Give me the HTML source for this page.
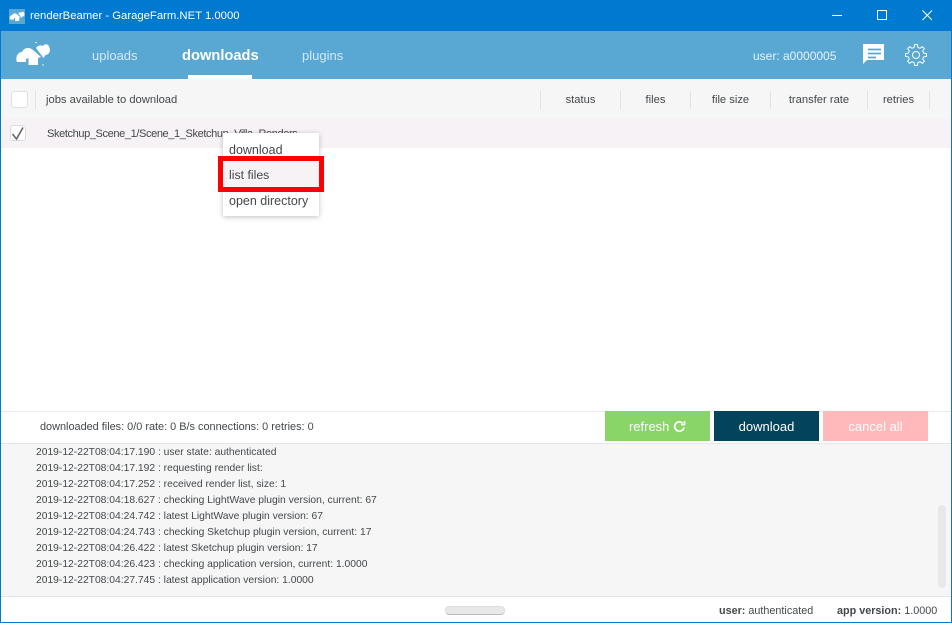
<!DOCTYPE html>
<html><head><meta charset="utf-8"><style>
html,body{margin:0;padding:0;background:#fff}
#w{position:relative;width:952px;height:623px;overflow:hidden;background:#fff;font-family:"Liberation Sans",sans-serif;font-size:11.5px;color:#43484b}
#w div,#w svg{position:absolute}
.t{white-space:nowrap;line-height:16px}
.c{text-align:center}
.sep{width:1px;height:18px;top:91px;background:#e2e2e2}
.btn{top:411px;width:105px;height:30px;line-height:31px;text-align:center;color:#fff;font-size:13px}
.log{left:36px;font-size:10.3px;white-space:nowrap;line-height:16px;color:#43484b}
</style></head><body><div id="w">
<div style="left:0;top:0;width:952px;height:31px;background:#0079d0"></div>
<div style="left:0;top:31px;width:952px;height:48px;background:#58a8d3"></div>
<div style="left:9px;top:9px;width:16px;height:15px;background:#58a8d3"></div>
<svg style="left:9px;top:9px" width="16" height="15" viewBox="5 4 36 26"><path fill="#fff" d="M7 24C5 19 8 14 12 14C14 9 20 9 23 12L31 19L28 20V27H18.500V20L16 21V24Z"/><path fill="#fff" d="M26 10C28 7 31 7 33 8C35 5 39 6 39.500 10C41 14 38 17 35.500 17L33.500 20Z"/></svg>
<div class="t" style="left:30px;top:8px;color:#fff;font-size:11.300px">renderBeamer - GarageFarm.NET 1.0000</div>
<svg style="left:832px;top:8px" width="110" height="16" fill="none" stroke="#fff" stroke-width="1"><path d="M0 7.500H10"/><rect x="45.500" y="2.500" width="9" height="9"/><path d="M90.500 2.500L100 12M100 2.500L90.500 12"/></svg>
<svg style="left:10px;top:38px" width="50" height="34" viewBox="0 0 50 34"><path fill="#fff" d="M7 24C5 19 8 14 12 14C14 9 20 9 23 12L31 19L28 20V27H18.500V20L16 21V24Z"/><path fill="#fff" d="M26 10C28 7 31 7 33 8C35 5 39 6 39.500 10C41 14 38 17 35.500 17L33.500 20Z"/><circle cx="26" cy="4.500" r=".8" fill="#fff"/><circle cx="33" cy="27" r=".7" fill="#fff"/></svg>
<div class="t" style="left:92px;top:48px;color:#d6e9f4;font-size:13px">uploads</div>
<div class="t" style="left:182px;top:48px;color:#fff;font-size:14.700px;font-weight:bold">downloads</div>
<div style="left:188px;top:75px;width:64px;height:4px;background:#fff"></div>
<div class="t" style="left:302px;top:48px;color:#d6e9f4;font-size:13px">plugins</div>
<div class="t" style="left:753px;top:48px;color:#e8f3f9;font-size:12px">user: a0000005</div>
<svg style="left:862px;top:43px" width="24" height="24" viewBox="0 0 24 24"><path fill="#fff" d="M1 1H22V17H5L1 21Z"/><path stroke="#58a8d3" stroke-width="1.800" d="M6 6.500H19M6 10.500H19M6 14.500H14"/></svg>
<svg style="left:904px;top:43px" width="24" height="24" viewBox="0 0 24 24" fill="none" stroke="#fff" stroke-width="1"><circle cx="12" cy="12" r="3.500"/><path d="M10.110 4.430L10.540 1.600H13.460L13.890 4.430L16.020 5.310L18.320 3.610L20.390 5.680L18.690 7.980L19.570 10.110L22.400 10.540V13.460L19.570 13.890L18.690 16.020L20.390 18.320L18.320 20.390L16.020 18.690L13.890 19.570L13.460 22.400H10.540L10.110 19.570L7.980 18.690L5.680 20.390L3.610 18.320L5.310 16.020L4.430 13.890L1.600 13.460V10.540L4.430 10.110L5.310 7.980L3.610 5.680L5.680 3.610L7.980 5.310Z"/></svg>
<div style="left:1px;top:79px;width:950px;height:40px;background:#f6f6f6"></div>
<div style="left:1px;top:118px;width:950px;height:30px;background:#f6f2f6"></div>
<div style="left:11px;top:91px;width:15px;height:15px;background:#fff;border:1px solid #e0e0e0;border-radius:3px"></div>
<div class="sep" style="left:35px"></div>
<div class="t" style="left:46px;top:92px;font-size:11.200px">jobs available to download</div>
<div class="sep" style="left:540px"></div>
<div class="t c" style="left:541px;width:79px;top:92px;font-size:11.200px">status</div>
<div class="sep" style="left:620px"></div>
<div class="t c" style="left:621px;width:69px;top:92px;font-size:11.200px">files</div>
<div class="sep" style="left:690px"></div>
<div class="t c" style="left:691px;width:79px;top:92px;font-size:11.200px">file size</div>
<div class="sep" style="left:770px"></div>
<div class="t c" style="left:771px;width:96px;top:92px;font-size:11.200px">transfer rate</div>
<div class="sep" style="left:867px"></div>
<div class="t c" style="left:868px;width:61px;top:92px;font-size:11.200px">retries</div>
<div class="sep" style="left:929px"></div>
<div style="left:10px;top:125px;width:14px;height:14px;background:#fff;border:1px solid #dcdcdc;border-radius:3px"></div>
<svg style="left:10px;top:125px" width="16" height="16" fill="none" stroke="#666" stroke-width="1.600"><path d="M2.500 9L6.500 14L13 2.500"/></svg>
<div class="t" style="left:47px;top:126px;font-size:11px;letter-spacing:-.38px">Sketchup_Scene_1/Scene_1_Sketchup_Villa_Renders</div>
<div style="left:223px;top:133px;width:96px;height:83px;background:#fff;box-shadow:0 1px 5px rgba(0,0,0,.25)"></div>
<div style="left:223px;top:160px;width:96px;height:27px;background:#f6f2f6"></div>
<div style="left:218px;top:156px;width:96px;height:26px;border:5px solid #fe0000"></div>
<div class="t" style="left:229px;top:142px;font-size:12.500px">download</div>
<div class="t" style="left:229px;top:167px;font-size:12.300px">list files</div>
<div class="t" style="left:229px;top:193px;font-size:12.500px">open directory</div>
<div style="left:1px;top:411px;width:950px;height:1px;background:#ececec"></div>
<div class="t" style="left:40px;top:419px;font-size:10.900px">downloaded files: 0/0 rate: 0 B/s connections: 0 retries: 0</div>
<div class="btn" style="left:605px;background:#8ad568">refresh <svg style="position:static;vertical-align:-2px" width="13" height="13" viewBox="0 0 13 13" fill="none" stroke="#fff" stroke-width="1.700"><path d="M11 7.500A4.700 4.700 0 1 1 9.500 3"/><path d="M11.500 1V4.500H8"/></svg></div>
<div class="btn" style="left:714px;background:#03445c">download</div>
<div class="btn" style="left:823px;background:#ffb9bb">cancel all</div>
<div style="left:1px;top:443px;width:950px;height:153px;background:#f6f6f6;border-top:1px solid #e6e6e6;box-sizing:border-box"></div>
<div class="log" style="top:445px">2019-12-22T08:04:17.190 : user state: authenticated</div>
<div class="log" style="top:461px">2019-12-22T08:04:17.192 : requesting render list:</div>
<div class="log" style="top:477px">2019-12-22T08:04:17.252 : received render list, size: 1</div>
<div class="log" style="top:493px">2019-12-22T08:04:18.627 : checking LightWave plugin version, current: 67</div>
<div class="log" style="top:509px">2019-12-22T08:04:24.742 : latest LightWave plugin version: 67</div>
<div class="log" style="top:525px">2019-12-22T08:04:24.743 : checking Sketchup plugin version, current: 17</div>
<div class="log" style="top:541px">2019-12-22T08:04:26.422 : latest Sketchup plugin version: 17</div>
<div class="log" style="top:557px">2019-12-22T08:04:26.423 : checking application version, current: 1.0000</div>
<div class="log" style="top:573px">2019-12-22T08:04:27.745 : latest application version: 1.0000</div>
<div style="left:938px;top:505px;width:8px;height:83px;background:#e8e8e8;border-radius:4px"></div>
<div style="left:1px;top:596px;width:950px;height:1px;background:#e6e6e6"></div>
<div style="left:445px;top:606px;width:60px;height:9px;background:#e8e8e8;border:1px solid #ddd;border-bottom-color:#bbb;border-radius:4px;box-sizing:border-box"></div>
<div class="t" style="left:719px;top:603px;font-size:10.800px"><b>user:</b> authenticated</div>
<div class="t" style="left:837px;top:603px;font-size:10.800px"><b>app version:</b> 1.0000</div>
<div style="left:0;top:31px;width:1px;height:592px;background:#0079d0"></div>
<div style="left:951px;top:31px;width:1px;height:592px;background:#0079d0"></div>
<div style="left:0;top:622px;width:952px;height:1px;background:#0079d0"></div>
</div></body></html>
